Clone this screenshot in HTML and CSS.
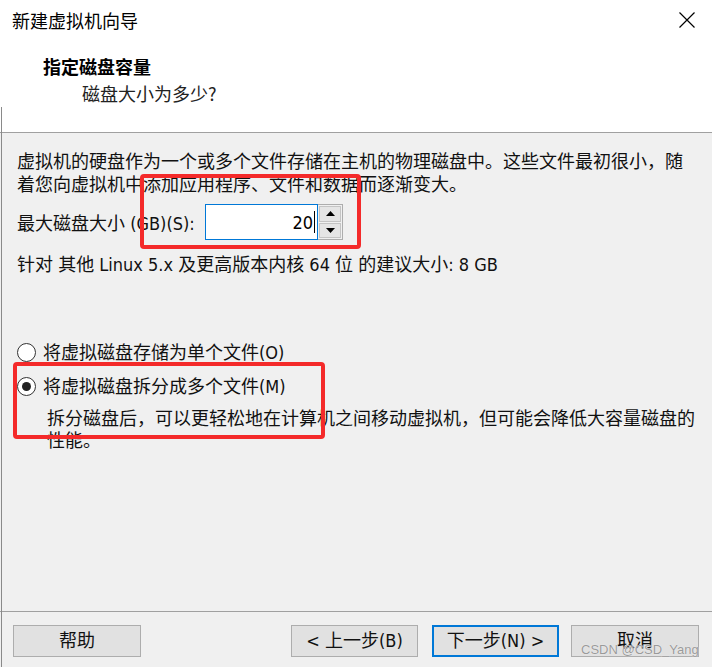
FILE: index.html
```html
<!DOCTYPE html>
<html lang="zh-CN">
<head>
<meta charset="utf-8">
<title>新建虚拟机向导</title>
<link rel="stylesheet" href="styles.css">
</head>
<body>
<div class="window">
  <header class="header">
    <div class="titlebar">
      <span class="title">新建虚拟机向导</span>
      <svg class="close" width="16" height="16" viewBox="0 0 16 16"><path d="M0.5 0.5L15.5 15.5M15.5 0.5L0.5 15.5" stroke="#000" stroke-width="1.2" fill="none"/></svg>
    </div>
    <div class="heading">指定磁盘容量</div>
    <div class="subheading">磁盘大小为多少?</div>
  </header>
  <main class="content">
    <p class="intro">虚拟机的硬盘作为一个或多个文件存储在主机的物理磁盘中。这些文件最初很小，随着您向虚拟机中添加应用程序、文件和数据而逐渐变大。</p>
    <div class="size-row">
      <span class="size-label">最大磁盘大小 (GB)(S):</span>
      <div class="spin">
        <div class="spin-input"><span class="value">20</span><span class="caret"></span></div>
        <div class="spin-buttons">
          <span class="spin-btn"><svg width="9" height="5" viewBox="0 0 9 5"><path d="M4.5 0L9 5H0z" fill="#000"/></svg></span>
          <span class="spin-btn"><svg width="9" height="5" viewBox="0 0 9 5"><path d="M0 0H9L4.5 5z" fill="#000"/></svg></span>
        </div>
      </div>
    </div>
    <p class="recommend">针对 其他 Linux 5.x 及更高版本内核 64 位 的建议大小: 8 GB</p>
    <div class="options">
      <div class="radio-row"><span class="radio"></span><span>将虚拟磁盘存储为单个文件(O)</span></div>
      <div class="radio-row second"><span class="radio checked"></span><span>将虚拟磁盘拆分成多个文件(M)</span></div>
      <p class="desc">拆分磁盘后，可以更轻松地在计算机之间移动虚拟机，但可能会降低大容量磁盘的性能。</p>
    </div>
  </main>
  <footer class="footer">
    <button class="btn btn-help">帮助</button>
    <div class="nav">
      <button class="btn btn-back">&lt; 上一步(B)</button>
      <button class="btn btn-next">下一步(N) &gt;</button>
      <button class="btn btn-cancel">取消</button>
    </div>
  </footer>
  <div class="mark mark-size"></div>
  <div class="mark mark-split"></div>
  <div class="watermark">CSDN @CSD_Yang</div>
</div>
</body>
</html>
```
FILE: styles.css
```css
* { box-sizing: border-box; }
html, body { margin: 0; padding: 0; }
body {
  width: 712px;
  height: 667px;
  overflow: hidden;
  background: #f0f0f0;
  font-family: "DejaVu Sans Condensed", "DejaVu Sans", "Noto Sans CJK SC", sans-serif;
  font-size: 18px;
  color: #111;
}
.window {
  position: relative;
  width: 712px;
  height: 667px;
  display: flex;
  flex-direction: column;
}
.window::before {
  content: "";
  position: absolute;
  left: 1px;
  top: 107px;
  bottom: 0;
  width: 1px;
  background: #8a8a8a;
}
.header {
  height: 133px;
  background: #fff;
  border-bottom: 1px solid #a0a0a0;
  flex: none;
}
.titlebar {
  height: 40px;
  display: flex;
  align-items: center;
  justify-content: space-between;
  padding: 0 17px 0 12px;
  font-family: "Noto Sans CJK SC", sans-serif;
  color: #000;
}
.close { display: block; }
.heading {
  margin-top: 13px;
  padding-left: 43px;
  line-height: 27px;
  font-weight: 700;
  font-family: "Noto Sans CJK SC", sans-serif;
  color: #000;
}
.subheading {
  padding-left: 82px;
  line-height: 27px;
  font-family: "Noto Sans CJK SC", sans-serif;
  color: #222;
}
.content {
  flex: 1;
  padding: 17px 0 0 17px;
}
.intro {
  margin: 0;
  width: 672px;
  line-height: 23px;
}
.size-row {
  margin-top: 8px;
  display: flex;
  align-items: center;
}
.size-label { width: 188px; }
.spin { display: flex; height: 36px; }
.spin-input {
  width: 113px;
  height: 36px;
  background: #fff;
  border: 1px solid #0078d7;
  display: flex;
  align-items: center;
  justify-content: flex-end;
  padding-right: 2px;
  color: #000;
}
.caret {
  width: 1px;
  height: 22px;
  background: #000;
  margin-left: 1px;
}
.spin-buttons {
  width: 25px;
  height: 36px;
  border: 1px solid #adadad;
  border-left: none;
  display: flex;
  flex-direction: column;
  background: #f0f0f0;
  padding: 1px;
  gap: 1px;
}
.spin-btn {
  flex: 1;
  background: #e5e5e5;
  border: 1px solid #c4c4c4;
  display: flex;
  align-items: center;
  justify-content: center;
}
.spin-btn svg { display: block; }
.recommend {
  margin: 13px 0 0;
  line-height: 23px;
}
.options { margin-top: 65px; }
.radio-row {
  display: flex;
  align-items: center;
  line-height: 23px;
  gap: 7px;
}
.radio-row.second { margin-top: 11px; }
.radio {
  width: 19px;
  height: 19px;
  border-radius: 50%;
  border: 1px solid #333;
  background: #fff;
  display: flex;
  align-items: center;
  justify-content: center;
}
.radio.checked::after {
  content: "";
  width: 9px;
  height: 9px;
  border-radius: 50%;
  background: #222;
}
.desc {
  margin: 10px 0 0;
  padding-left: 30px;
  width: 684px;
  line-height: 22px;
}
.footer {
  flex: none;
  height: 56px;
  border-top: 1px solid #a0a0a0;
  padding: 13px 13px 0 13px;
  display: flex;
  justify-content: space-between;
  align-items: flex-start;
}
.nav { display: flex; }
.btn {
  height: 32px;
  background: #e1e1e1;
  border: 1px solid #adadad;
  font: inherit;
  color: #111;
  padding: 0;
  margin: 0;
  line-height: 28px;
}
.btn-help { width: 128px; }
.btn-back { width: 127px; }
.btn-next { width: 127px; margin-left: 14px; border: 2px solid #0078d7; }
.btn-cancel { width: 128px; margin-left: 12px; }
.mark {
  position: absolute;
  border: 4px solid #f42a2a;
  border-radius: 4px;
}
.mark-size { left: 140px; top: 174px; width: 221px; height: 75px; }
.mark-split { left: 13px; top: 362px; width: 312px; height: 77px; }
.watermark {
  position: absolute;
  left: 581px;
  top: 642px;
  font-family: "Liberation Sans", sans-serif;
  font-size: 13px;
  line-height: 16px;
  color: #9a9a9a;
  text-shadow: 0 0 1px #fff;
}
```
